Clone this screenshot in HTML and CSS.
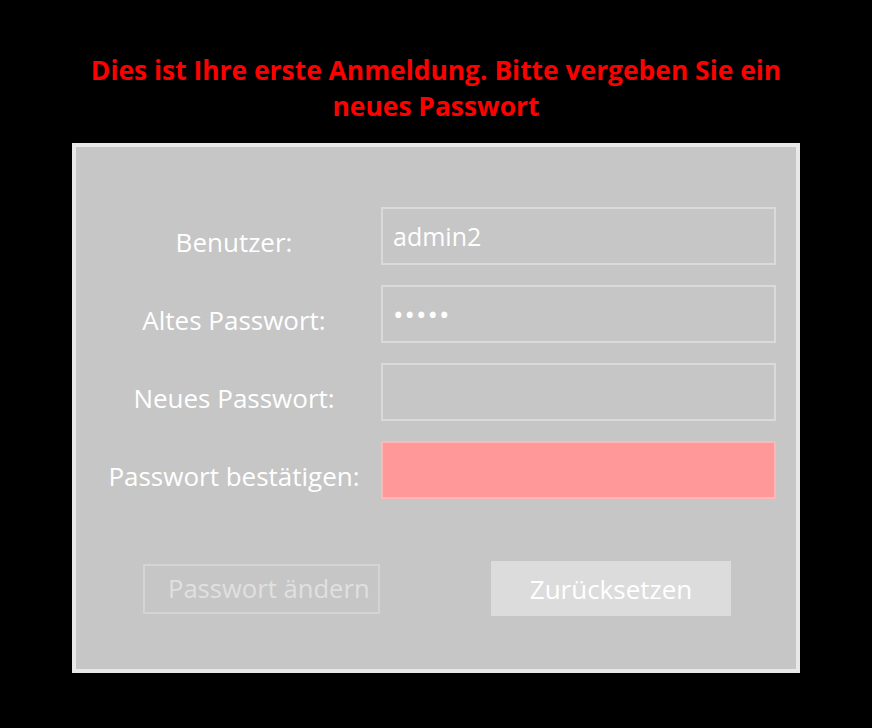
FILE: index.html
```html
<!DOCTYPE html>
<html lang="de">
<head>
    <meta charset="UTF-8">
    <title>Passwort ändern</title>
    <link rel="stylesheet" href="styles.css">
</head>
<body>
<h1 class="notice">Dies ist Ihre erste Anmeldung. Bitte vergeben Sie ein<br>neues Passwort</h1>

<form class="pw-panel">
    <div class="pw-grid">
        <label for="user" class="pw-label">Benutzer:</label>
        <input type="text" id="user" class="pw-input" value="admin2">

        <label for="old-pw" class="pw-label">Altes Passwort:</label>
        <input type="password" id="old-pw" class="pw-input" value="admin">

        <label for="new-pw" class="pw-label">Neues Passwort:</label>
        <input type="password" id="new-pw" class="pw-input">

        <label for="confirm-pw" class="pw-label">Passwort bestätigen:</label>
        <input type="password" id="confirm-pw" class="pw-input pw-invalid">
    </div>

    <div class="buttons">
        <button type="button" id="change" class="btn btn-change" disabled>Passwort ändern</button>
        <button type="reset" id="reset" class="btn btn-reset">Zurücksetzen</button>
    </div>
</form>
</body>
</html>
```

FILE: styles.css
```css
body {
    margin: 0;
    background: #000;
    font-family: "Open Sans", "Noto Sans", sans-serif;
    color: #fff;
}

.notice {
    margin: 52px 0 0;
    height: 91px;
    font-size: 26.4px;
    line-height: 36px;
    font-weight: 700;
    color: #ff0000;
    text-align: center;
}

.pw-panel {
    box-sizing: border-box;
    width: 728px;
    height: 530px;
    margin: 0 0 0 72px;
    border: 4px solid #e8e8e8;
    background: #c6c6c6;
}

.pw-grid {
    display: grid;
    grid-template-columns: 305px 395px;
    grid-auto-rows: 58px;
    row-gap: 20px;
    padding-top: 60px;
}

.pw-label {
    padding: 12px 0 0 11px;
    font-size: 26px;
    align-self: center;
    text-align: center;
}

.pw-input {
    box-sizing: border-box;
    width: 395px;
    height: 58px;
    padding: 0 10px;
    border: 2px solid #dadada;
    background: transparent;
    font-family: inherit;
    font-size: 25px;
    color: #fff;
    outline: none;
}

.pw-input[type="password"] {
    font-size: 28px;
    letter-spacing: 1px;
}

.pw-invalid {
    background: #ff9898;
    border-color: #ffb6b6;
}

.buttons {
    display: flex;
    align-items: center;
    padding: 62px 0 0 67px;
}

.btn {
    box-sizing: border-box;
    font-family: inherit;
    font-size: 26px;
    color: #fff;
    padding: 0;
}

.btn-change {
    width: 237px;
    height: 50px;
    margin-right: 111px;
    padding-left: 23px;
    text-align: left;
    white-space: nowrap;
    font-size: 25.6px;
    border: 2px solid #d4d4d4;
    background: transparent;
    color: #e0e0e0;
}

.btn-reset {
    width: 240px;
    height: 55px;
    border: none;
    background: #dcdcdc;
}
```
